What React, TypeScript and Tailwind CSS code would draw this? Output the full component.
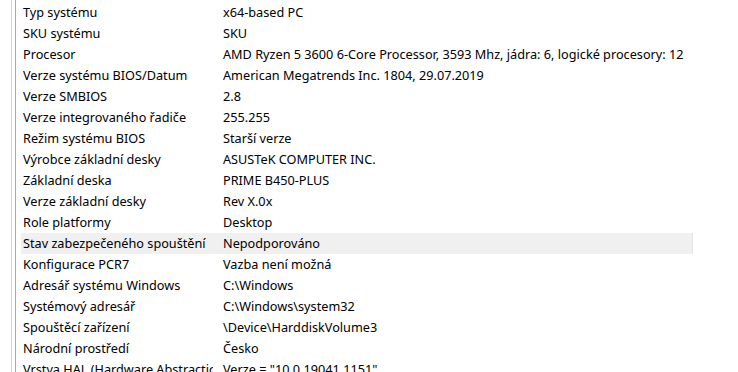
const rows: [string, string][] = [
  ["Typ systému", "x64-based PC"],
  ["SKU systému", "SKU"],
  ["Procesor", "AMD Ryzen 5 3600 6-Core Processor, 3593 Mhz, jádra: 6, logické procesory: 12"],
  ["Verze systému BIOS/Datum", "American Megatrends Inc. 1804, 29.07.2019"],
  ["Verze SMBIOS", "2.8"],
  ["Verze integrovaného řadiče", "255.255"],
  ["Režim systému BIOS", "Starší verze"],
  ["Výrobce základní desky", "ASUSTeK COMPUTER INC."],
  ["Základní deska", "PRIME B450-PLUS"],
  ["Verze základní desky", "Rev X.0x"],
  ["Role platformy", "Desktop"],
  ["Stav zabezpečeného spouštění", "Nepodporováno"],
  ["Konfigurace PCR7", "Vazba není možná"],
  ["Adresář systému Windows", "C:\\Windows"],
  ["Systémový adresář", "C:\\Windows\\system32"],
  ["Spouštěcí zařízení", "\\Device\\HarddiskVolume3"],
  ["Národní prostředí", "Česko"],
  ["Vrstva HAL (Hardware Abstraction Layer)", 'Verze = "10.0.19041.1151"'],
];

export default function App() {
  return (
    <div className="flex h-[372px] w-[738px] overflow-hidden bg-white font-['Noto_Sans',sans-serif] text-[12.7px] text-black">
      <div className="ml-[11px] w-px bg-[#d4d4d4]" />
      <div className="ml-[3px] w-px bg-[#a9a9a9]" />
      <div className="flex flex-col pt-[2px] pl-[5px]">
        {rows.map(([label, value], i) => (
          <div
            key={label}
            className={`flex h-[21px] w-[672px] shrink-0 items-center ${i === 11 ? "bg-[#f0f0f0] border-r border-[#e4e4e4]" : ""}`}
          >
            <div className="w-[200px] shrink-0 pl-[2px] pr-[8px]">
              <div className="overflow-hidden whitespace-nowrap">{label}</div>
            </div>
            <div className="whitespace-nowrap pl-[2px]">{value}</div>
          </div>
        ))}
      </div>
    </div>
  );
}
